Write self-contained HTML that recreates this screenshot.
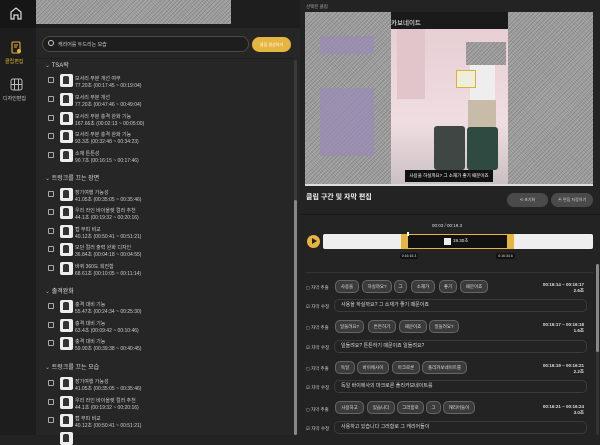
<!DOCTYPE html>
<html><head><meta charset="utf-8">
<style>
*{margin:0;padding:0;box-sizing:border-box}
body{width:600px;height:435px;overflow:hidden;background:#232323;font-family:"Liberation Sans","Noto Sans CJK KR",sans-serif;color:#ddd;position:relative}
.a{position:absolute}
.t{font-size:5px;color:#ccc;white-space:nowrap}
.cb{position:absolute;width:6px;height:6px;border:1px solid #aaa;border-radius:1px}
.th{position:absolute;width:13px;height:13px;background:#eee;border-radius:2px;overflow:hidden}
.th:after{content:"";position:absolute;left:3px;top:2px;width:6px;height:8px;background:#333;border-radius:2px 2px 0 0}
.gh{position:absolute;font-size:6px;color:#ddd;white-space:nowrap}
.gh:before{content:"⌄ ";color:#aaa}
.chip{position:absolute;height:13px;border:1px solid #666;background:#3b3b3b;border-radius:5px;font-size:4.5px;color:#ddd;text-align:center;line-height:11px;white-space:nowrap}
.ed{position:absolute;left:334px;width:253px;height:13px;border:1px solid #3a3a3a;border-radius:5px;font-size:5px;color:#ddd;line-height:11px;padding-left:6px}
.lb{position:absolute;left:306px;font-size:4.5px;color:#ccc;white-space:nowrap}
.tm{position:absolute;right:16px;font-size:4.5px;color:#ddd;text-align:right;line-height:6px;font-weight:bold}
.noise{background:#9a9a9a;background-image:repeating-linear-gradient(45deg,rgba(255,255,255,.15) 0 1px,transparent 1px 2px),repeating-linear-gradient(-45deg,rgba(0,0,0,.15) 0 1px,transparent 1px 3px)}
</style></head><body>
<!-- sidebar -->
<div class="a" style="left:0;top:0;width:36px;height:435px;background:#1d1d1d"></div>
<div class="a" style="left:0;top:0;width:36px;height:28px;background:#161616"></div>
<svg class="a" style="left:9px;top:6px" width="14" height="14" viewBox="0 0 14 14"><path d="M2 13V6L7 2l5 4v7H9V9H5v4z" fill="none" stroke="#ddd" stroke-width="1.2"/></svg>
<svg class="a" style="left:11px;top:41px" width="11" height="13" viewBox="0 0 11 13"><rect x="1" y="1" width="8" height="11" rx="1" fill="none" stroke="#e0b030" stroke-width="1.1"/><path d="M3 4h4M3 6h3" stroke="#e0b030"/><circle cx="8" cy="10" r="2" fill="#e0b030"/></svg>
<div class="a t" style="left:5px;top:58px;color:#e0b030;font-size:5px">클립편집</div>
<svg class="a" style="left:10px;top:78px" width="13" height="13" viewBox="0 0 13 13"><rect x="1" y="1" width="11" height="11" rx="2" fill="none" stroke="#bbb"/><path d="M1 6.5h11M4.5 1v11M8.5 1v11" stroke="#bbb"/></svg>
<div class="a t" style="left:3px;top:95px;font-size:5px">디자인편집</div>
<!-- left panel -->
<div class="a" style="left:36px;top:0;width:264px;height:435px;background:#262626"></div>
<div class="a" style="left:36px;top:0;width:264px;height:28px;background:#1e1e1e"></div>
<div class="a noise" style="left:36px;top:0;width:195px;height:24px"></div>
<div class="a" style="left:42px;top:36px;width:207px;height:16px;border:1px solid #4a4a3a;border-radius:8px;background:#1e1e1e"></div>
<div class="a" style="left:48px;top:40px;width:6px;height:6px;border:1px solid #ccc;border-radius:50%"></div>
<div class="a t" style="left:58px;top:41px">캐리어를 두드리는 모습</div>
<div class="a" style="left:252px;top:37px;width:39px;height:15px;border-radius:8px;background:#e6b540;font-size:4px;color:#fff;text-align:center;line-height:15px">클립 생성하기</div>
<div class="a" style="left:36px;top:58px;width:258px;height:1px;background:#1e1e1e"></div>
<div class="a" style="left:294px;top:60px;width:3px;height:375px;background:#3a3a3a;border-radius:2px"></div>
<div class="a" style="left:294px;top:200px;width:3px;height:235px;background:#888;border-radius:2px"></div>

<div class="gh" style="left:45px;top:60px">TSA락</div>
<div class="cb" style="left:48px;top:77px"></div><div class="th" style="left:60px;top:74px"></div><div class="a t" style="left:75px;top:75px">모서리 부분 개선 여부<br>77.20초 (00:17:45 ~ 00:19:04)</div>
<div class="cb" style="left:48px;top:96px"></div><div class="th" style="left:60px;top:93px"></div><div class="a t" style="left:75px;top:94px">모서리 부분 개선<br>77.20초 (00:47:46 ~ 00:49:04)</div>
<div class="cb" style="left:48px;top:115px"></div><div class="th" style="left:60px;top:112px"></div><div class="a t" style="left:75px;top:113px">모서리 부분 충격 완화 기능<br>167.66초 (00:02:13 ~ 00:05:00)</div>
<div class="cb" style="left:48px;top:133px"></div><div class="th" style="left:60px;top:130px"></div><div class="a t" style="left:75px;top:131px">모서리 부분 충격 완화 기능<br>93.3초 (00:32:48 ~ 00:34:23)</div>
<div class="cb" style="left:48px;top:152px"></div><div class="th" style="left:60px;top:149px"></div><div class="a t" style="left:75px;top:150px">소재 튼튼성<br>90.7초 (00:16:15 ~ 00:17:46)</div>

<div class="gh" style="left:45px;top:173px">트렁크를 끄는 장면</div>
<div class="cb" style="left:48px;top:191px"></div><div class="th" style="left:60px;top:188px"></div><div class="a t" style="left:75px;top:189px">장기여행 가능성<br>41.05초 (00:35:05 ~ 00:35:46)</div>
<div class="cb" style="left:48px;top:209px"></div><div class="th" style="left:60px;top:206px"></div><div class="a t" style="left:75px;top:207px">우리 라인 바이올렛 컬러 추천<br>44.1초 (00:19:32 ~ 00:20:16)</div>
<div class="cb" style="left:48px;top:228px"></div><div class="th" style="left:60px;top:225px"></div><div class="a t" style="left:75px;top:226px">캡 부피 비교<br>40.12초 (00:50:41 ~ 00:51:21)</div>
<div class="cb" style="left:48px;top:246px"></div><div class="th" style="left:60px;top:243px"></div><div class="a t" style="left:75px;top:244px">모던 컬러 출력 완화 디자인<br>36.84초 (00:04:18 ~ 00:04:55)</div>
<div class="cb" style="left:48px;top:265px"></div><div class="th" style="left:60px;top:262px"></div><div class="a t" style="left:75px;top:263px">바퀴 360도 회전함<br>68.61초 (00:10:05 ~ 00:11:14)</div>

<div class="gh" style="left:45px;top:286px">출격완화</div>
<div class="cb" style="left:48px;top:303px"></div><div class="th" style="left:60px;top:300px"></div><div class="a t" style="left:75px;top:301px">충격 대비 기능<br>55.47초 (00:24:34 ~ 00:25:30)</div>
<div class="cb" style="left:48px;top:322px"></div><div class="th" style="left:60px;top:319px"></div><div class="a t" style="left:75px;top:320px">충격 대비 기능<br>63.4초 (00:09:42 ~ 00:10:46)</div>
<div class="cb" style="left:48px;top:340px"></div><div class="th" style="left:60px;top:337px"></div><div class="a t" style="left:75px;top:338px">충격 대비 기능<br>59.90초 (00:39:38 ~ 00:40:45)</div>

<div class="gh" style="left:45px;top:362px">트렁크를 끄는 모습</div>
<div class="cb" style="left:48px;top:380px"></div><div class="th" style="left:60px;top:377px"></div><div class="a t" style="left:75px;top:378px">장기여행 가능성<br>41.05초 (00:35:05 ~ 00:35:46)</div>
<div class="cb" style="left:48px;top:399px"></div><div class="th" style="left:60px;top:396px"></div><div class="a t" style="left:75px;top:397px">우리 라인 바이올렛 컬러 추천<br>44.1초 (00:19:32 ~ 00:20:16)</div>
<div class="cb" style="left:48px;top:417px"></div><div class="th" style="left:60px;top:414px"></div><div class="a t" style="left:75px;top:415px">캡 부피 비교<br>40.12초 (00:50:41 ~ 00:51:21)</div>
<div class="th" style="left:60px;top:432px"></div>

<!-- right panel -->
<div class="a" style="left:300px;top:0;width:300px;height:435px;background:#232323"></div>
<div class="a t" style="left:306px;top:4px;font-size:4.5px;color:#aaa">선택된 클립</div>
<div class="a" style="left:305px;top:12px;width:288px;height:17px;background:#1a1a1a"></div>
<div class="a" style="left:305px;top:29px;width:288px;height:157px;background:#111"></div>
<div class="a" style="left:391px;top:29px;width:117px;height:156px;background:linear-gradient(180deg,#e7cfd3 0%,#f0dde2 60%,#c9c0c2 100%)"></div>
<div class="a" style="left:397px;top:29px;width:28px;height:70px;background:#e2c5ca"></div>
<div class="a" style="left:470px;top:55px;width:25px;height:70px;background:#eee;border-radius:4px"></div>
<div class="a" style="left:468px;top:100px;width:28px;height:30px;background:#c8bca8"></div>
<div class="a" style="left:456px;top:70px;width:20px;height:18px;background:#eed;border:1px solid #e0b030"></div>
<div class="a" style="left:434px;top:126px;width:31px;height:44px;background:#3e4744;border-radius:3px"></div>
<div class="a" style="left:467px;top:127px;width:31px;height:43px;background:#2f4a40;border-radius:3px"></div>
<div class="a noise" style="left:305px;top:12px;width:86px;height:172px"></div>
<div class="a" style="left:320px;top:36px;width:54px;height:18px;background:#9a8ab8;opacity:.7"></div>
<div class="a" style="left:320px;top:88px;width:54px;height:68px;background:#9a8ab8;opacity:.7"></div>
<div class="a noise" style="left:508px;top:12px;width:85px;height:172px"></div>
<div class="a noise" style="left:466px;top:42px;width:40px;height:23px"></div>
<div class="a" style="left:391px;top:17px;width:90px;height:11px;font-size:6.5px;color:#fff;padding-left:0">카보네이트</div>
<div class="a" style="left:405px;top:170px;width:88px;height:12px;background:#111;font-size:4.5px;color:#fff;text-align:center;line-height:12px">사용을 하실까요? 그 소재가 좋기 때문이죠</div>
<div class="a" style="left:305px;top:184px;width:288px;height:2px;background:#ddd"></div>

<div class="a" style="left:306px;top:192px;font-size:7px;color:#eee;font-weight:bold">클립 구간 및 자막 편집</div>
<div class="a" style="left:507px;top:193px;width:41px;height:14px;border-radius:7px;background:#4a4a4a;font-size:4px;color:#ccc;text-align:center;line-height:14px">⟲ 초기화</div>
<div class="a" style="left:551px;top:193px;width:42px;height:14px;border-radius:7px;background:#4a4a4a;font-size:4px;color:#ccc;text-align:center;line-height:14px">▣ 편집 저장하기</div>
<div class="a" style="left:300px;top:214px;width:300px;height:1px;background:#1a1a1a"></div>
<div class="a" style="left:432px;top:223px;font-size:4.5px;color:#ddd">00:03 / 00:19.3</div>
<div class="a" style="left:307px;top:235px;width:13px;height:13px;border-radius:50%;background:#e6b540"></div>
<div class="a" style="left:312px;top:238px;width:0;height:0;border-left:5px solid #222;border-top:3.5px solid transparent;border-bottom:3.5px solid transparent"></div>
<div class="a" style="left:323px;top:234px;width:270px;height:15px;background:#eee;border-radius:2px"></div>
<div class="a" style="left:401px;top:234px;width:113px;height:15px;background:#111;border-top:1px solid #e6b540;border-bottom:1px solid #e6b540"></div>
<div class="a" style="left:401px;top:234px;width:7px;height:15px;background:#e6b540"></div>
<div class="a" style="left:507px;top:234px;width:7px;height:15px;background:#e6b540"></div>
<div class="a" style="left:407px;top:232px;width:1.5px;height:4px;background:#fff"></div>
<div class="a" style="left:444px;top:238px;width:7px;height:7px;background:#eee"></div>
<div class="a" style="left:453px;top:238px;font-size:4.5px;color:#eee">19.30초</div>
<div class="a" style="left:400px;top:253px;width:18px;height:6px;background:#111;font-size:3.5px;color:#ddd;text-align:center;line-height:6px;border-radius:2px">0:16:15.3</div>
<div class="a" style="left:496px;top:253px;width:19px;height:6px;background:#111;font-size:3.5px;color:#ddd;text-align:center;line-height:6px;border-radius:2px">0:16:34.6</div>
<div class="a" style="left:305px;top:272px;width:288px;height:1px;background:#333"></div>
<div class="a" style="left:596px;top:264px;width:3px;height:171px;background:#333;border-radius:2px"></div>
<div class="a" style="left:596px;top:264px;width:3px;height:88px;background:#888;border-radius:2px"></div>

<!-- row 1 -->
<div class="lb" style="top:285px">◻ 자막 추출</div>
<div class="chip" style="left:335px;top:280px;width:24px">사용을</div>
<div class="chip" style="left:362px;top:280px;width:30px">하실까요?</div>
<div class="chip" style="left:394px;top:280px;width:13px">그</div>
<div class="chip" style="left:411px;top:280px;width:24px">소재가</div>
<div class="chip" style="left:439px;top:280px;width:18px">좋기</div>
<div class="chip" style="left:460px;top:280px;width:28px">때문이죠</div>
<div class="tm" style="top:282px">00:16:14 ~ 00:16:17<br>2.6초</div>
<div class="lb" style="top:304px">☑ 자막 수정</div>
<div class="ed" style="top:299px">사용을 하실까요? 그 소재가 좋기 때문이죠</div>
<!-- row 2 -->
<div class="lb" style="top:325px">◻ 자막 추출</div>
<div class="chip" style="left:335px;top:320px;width:29px">일들려요?</div>
<div class="chip" style="left:368px;top:320px;width:28px">튼튼하기</div>
<div class="chip" style="left:399px;top:320px;width:28px">때문이죠</div>
<div class="chip" style="left:429px;top:320px;width:30px">일들려요?</div>
<div class="tm" style="top:322px">00:16:17 ~ 00:16:18<br>1.6초</div>
<div class="lb" style="top:345px">☑ 자막 수정</div>
<div class="ed" style="top:340px">일들려요? 튼튼하기 때문이죠 일들려요?</div>
<!-- row 3 -->
<div class="lb" style="top:366px">◻ 자막 추출</div>
<div class="chip" style="left:335px;top:361px;width:20px">독일</div>
<div class="chip" style="left:357px;top:361px;width:32px">바이에사이</div>
<div class="chip" style="left:392px;top:361px;width:28px">마크로론</div>
<div class="chip" style="left:422px;top:361px;width:45px">폴리카보네이트를</div>
<div class="tm" style="top:363px">00:16:19 ~ 00:16:21<br>2.2초</div>
<div class="lb" style="top:385px">☑ 자막 수정</div>
<div class="ed" style="top:380px">독일 바이에사의 마크로론 폴리카보네이트를</div>
<!-- row 4 -->
<div class="lb" style="top:407px">◻ 자막 추출</div>
<div class="chip" style="left:335px;top:401px;width:29px">사용하고</div>
<div class="chip" style="left:367px;top:401px;width:28px">있습니다</div>
<div class="chip" style="left:397px;top:401px;width:27px">그러함로</div>
<div class="chip" style="left:426px;top:401px;width:15px">그</div>
<div class="chip" style="left:443px;top:401px;width:32px">캐리어들이</div>
<div class="tm" style="top:404px">00:16:21 ~ 00:16:24<br>3.0초</div>
<div class="lb" style="top:426px">☑ 자막 수정</div>
<div class="ed" style="top:421px">사용하고 있습니다 그러함로 그 캐리어들이</div>
</body></html>
